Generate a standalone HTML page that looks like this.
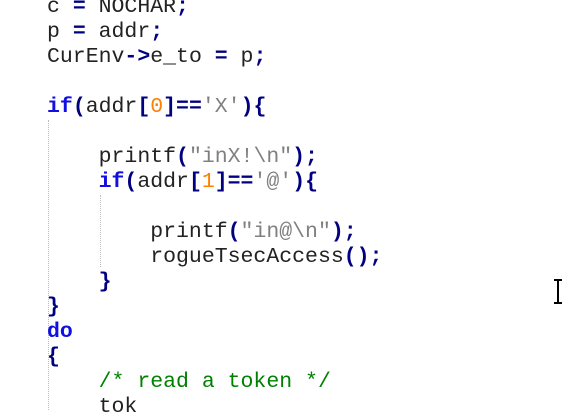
<!DOCTYPE html>
<html><head><style>
body{margin:0;width:566px;height:402px;background:#fff;overflow:hidden;position:relative}
pre{position:absolute;left:47px;top:-5.5px;margin:0;font-family:"Liberation Mono","Courier New",monospace;font-size:21.5px;line-height:25px;color:#222}
.k{color:#1010e0;font-weight:bold}
.o{color:#000080;font-weight:bold}
.n{color:#ff8000}
.s{color:#808080}
.c{color:#008000}
.g{position:absolute;width:0;border-left:1px dotted #bbb}
</style></head><body>
<div class="g" style="left:48px;top:120px;height:290px"></div>
<div class="g" style="left:100px;top:195px;height:72px"></div>
<pre>c <span class="o">=</span> NOCHAR<span class="o">;</span>
p <span class="o">=</span> addr<span class="o">;</span>
CurEnv<span class="o">-&gt;</span>e_to <span class="o">=</span> p<span class="o">;</span>

<span class="k">if</span><span class="o">(</span>addr<span class="o">[</span><span class="n">0</span><span class="o">]==</span><span class="s">'X'</span><span class="o">){</span>

    printf<span class="o">(</span><span class="s">"inX!\n"</span><span class="o">);</span>
    <span class="k">if</span><span class="o">(</span>addr<span class="o">[</span><span class="n">1</span><span class="o">]==</span><span class="s">'@'</span><span class="o">){</span>

        printf<span class="o">(</span><span class="s">"in@\n"</span><span class="o">);</span>
        rogueTsecAccess<span class="o">();</span>
    <span class="o">}</span>
<span class="o">}</span>
<span class="k">do</span>
<span class="o">{</span>
    <span class="c">/* read a token */</span>
    tok</pre>
<svg style="position:absolute;left:552px;top:279px" width="14" height="26"><path d="M2 1H10M6 1V24M2 24H10" stroke="#000" stroke-width="2" fill="none"/></svg>
</body></html>
